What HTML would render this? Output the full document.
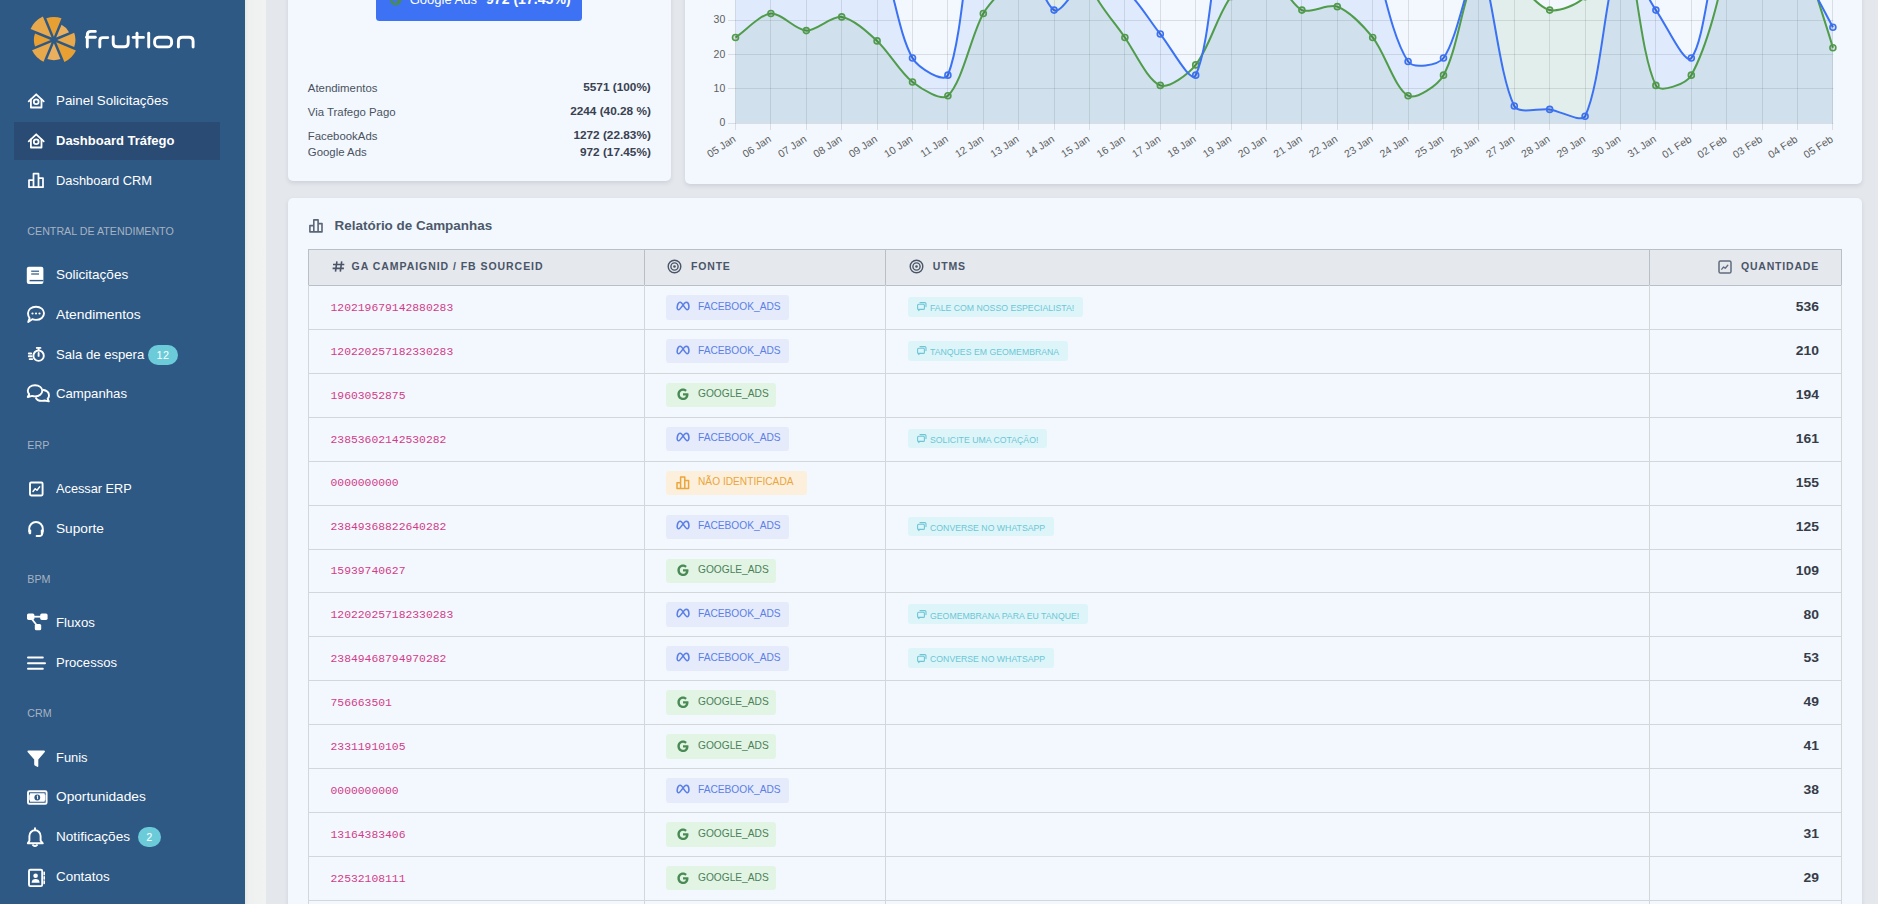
<!DOCTYPE html><html><head><meta charset="utf-8"><title>Dashboard Tráfego</title><style>html,body{margin:0;padding:0;}body{width:1878px;height:904px;overflow:hidden;position:relative;background:#e4e7ec;font-family:"Liberation Sans",sans-serif;}</style></head><body><div style="position:absolute;left:0px;top:0px;width:245px;height:904px;background:#2e5985;"></div><div style="position:absolute;left:245px;top:0px;width:21px;height:904px;background:linear-gradient(to right,#e6e7e7 0px,#eff1f1 4px,#f1f3f3 21px);"></div><svg style="position:absolute;left:0px;top:0px;overflow:visible" width="245" height="80" viewBox="0 0 245 80"><path d="M53.90,36.63 L46.30,18.30 A22.9,22.9 0 0 1 61.50,18.30 Z" fill="#e8a033"/><path d="M56.21,37.59 L61.54,24.71 A17,17 0 0 1 69.09,32.26 Z" fill="#eab05e"/><path d="M57.17,39.90 L74.21,32.84 A21.5,21.5 0 0 1 74.21,46.96 Z" fill="#e8a84c"/><path d="M56.21,42.21 L75.93,50.38 A24.4,24.4 0 0 1 64.38,61.93 Z" fill="#e8a033"/><path d="M53.90,43.17 L60.46,59.00 A20.2,20.2 0 0 1 47.34,59.00 Z" fill="#eab05e"/><path d="M51.59,42.21 L43.50,61.75 A24.2,24.2 0 0 1 32.05,50.30 Z" fill="#e8a84c"/><path d="M50.63,39.90 L34.98,46.38 A20,20 0 0 1 34.98,33.42 Z" fill="#e8a033"/><path d="M51.59,37.59 L30.57,28.88 A25.8,25.8 0 0 1 42.88,16.57 Z" fill="#e8a84c"/></svg><svg style="position:absolute;left:0px;top:0px;overflow:visible" width="245" height="80" viewBox="0 0 245 80"><g fill="none" stroke="#fff" stroke-width="2.9" stroke-linecap="round" stroke-linejoin="round"><path d="M87.3,47.1 V35 Q87.3,31.4 90.9,31.4 H95.3"/><path d="M86.6,37.2 H95.3"/><path d="M99.8,47.1 V40.6 Q99.8,37.6 102.8,37.6 H107.8"/><path d="M113.2,36.6 V43 Q113.2,46.8 117.2,46.8 H124.2 Q128.2,46.8 128.2,43 V36.6"/><path d="M137,33.3 V47.1"/><path d="M133.2,37.4 H143.4"/><path d="M148.7,33.3 V47.1"/><rect x="154.6" y="37.2" width="17" height="9.7" rx="4" ry="4"/><path d="M178.4,47.1 V41.2 Q178.4,37.2 182.4,37.2 H189.1 Q193.1,37.2 193.1,41.2 V47.1"/></g></svg><div style="position:absolute;left:14px;top:122px;width:206px;height:38px;background:#2a4b73;"></div><div style="position:absolute;left:27.3px;top:225.94px;font-family:'Liberation Sans', sans-serif;font-size:10.7px;line-height:10.7px;font-weight:400;color:#a7b3c1;white-space:nowrap;letter-spacing:0px;">CENTRAL DE ATENDIMENTO</div><div style="position:absolute;left:27.3px;top:439.94px;font-family:'Liberation Sans', sans-serif;font-size:10.7px;line-height:10.7px;font-weight:400;color:#a7b3c1;white-space:nowrap;letter-spacing:0px;">ERP</div><div style="position:absolute;left:27.3px;top:573.94px;font-family:'Liberation Sans', sans-serif;font-size:10.7px;line-height:10.7px;font-weight:400;color:#a7b3c1;white-space:nowrap;letter-spacing:0px;">BPM</div><div style="position:absolute;left:27.3px;top:707.94px;font-family:'Liberation Sans', sans-serif;font-size:10.7px;line-height:10.7px;font-weight:400;color:#a7b3c1;white-space:nowrap;letter-spacing:0px;">CRM</div><div style="position:absolute;left:56px;top:93.66px;font-family:'Liberation Sans', sans-serif;font-size:13.4px;line-height:13.4px;font-weight:400;color:#fff;white-space:nowrap;letter-spacing:0px;transform:scaleX(0.997);transform-origin:0 0;">Painel Solicitações</div><svg style="position:absolute;left:0px;top:0px;overflow:visible" width="245" height="904" viewBox="0 0 245 904"><g fill="none" stroke="#fff" stroke-width="1.8" stroke-linecap="round" stroke-linejoin="round"><path d="M28.7,101.30 L36.2,94.30 L43.7,101.30"/><path d="M30.9,99.40 V107.50 H41.5 V99.40"/><circle cx="36.2" cy="101.70" r="2.4"/></g></svg><div style="position:absolute;left:56px;top:134.00px;font-family:'Liberation Sans', sans-serif;font-size:13.0px;line-height:13.0px;font-weight:700;color:#fff;white-space:nowrap;letter-spacing:0px;transform:scaleX(1.0);transform-origin:0 0;">Dashboard Tráfego</div><svg style="position:absolute;left:0px;top:0px;overflow:visible" width="245" height="904" viewBox="0 0 245 904"><g fill="none" stroke="#fff" stroke-width="1.8" stroke-linecap="round" stroke-linejoin="round"><path d="M28.7,141.30 L36.2,134.30 L43.7,141.30"/><path d="M30.9,139.40 V147.50 H41.5 V139.40"/><circle cx="36.2" cy="141.70" r="2.4"/></g></svg><div style="position:absolute;left:56px;top:173.66px;font-family:'Liberation Sans', sans-serif;font-size:13.4px;line-height:13.4px;font-weight:400;color:#fff;white-space:nowrap;letter-spacing:0px;transform:scaleX(0.963);transform-origin:0 0;">Dashboard CRM</div><svg style="position:absolute;left:0px;top:0px;overflow:visible" width="245" height="904" viewBox="0 0 245 904"><g transform="translate(28,172.2)" fill="none" stroke="#fff" stroke-width="1.75" stroke-linejoin="round"><path d="M1,15 V8 H5.5 V15 Z M5.5,15 V1.5 H10.5 V15 Z M10.5,15 V6 H15 V15 Z"/></g></svg><div style="position:absolute;left:56px;top:267.66px;font-family:'Liberation Sans', sans-serif;font-size:13.4px;line-height:13.4px;font-weight:400;color:#fff;white-space:nowrap;letter-spacing:0px;transform:scaleX(1.01);transform-origin:0 0;">Solicitações</div><svg style="position:absolute;left:0px;top:0px;overflow:visible" width="245" height="904" viewBox="0 0 245 904"><g><rect x="26.8" y="266.70" width="16.6" height="17.4" rx="2" fill="#fff"/><rect x="29.6" y="279.90" width="13.8" height="1.4" fill="#2e5985"/><rect x="31.2" y="270.60" width="7.8" height="1.2" fill="#2e5985"/><rect x="31.2" y="273.40" width="7.8" height="1.2" fill="#2e5985"/></g></svg><div style="position:absolute;left:56px;top:307.66px;font-family:'Liberation Sans', sans-serif;font-size:13.4px;line-height:13.4px;font-weight:400;color:#fff;white-space:nowrap;letter-spacing:0px;transform:scaleX(1.035);transform-origin:0 0;">Atendimentos</div><svg style="position:absolute;left:0px;top:0px;overflow:visible" width="245" height="904" viewBox="0 0 245 904"><g transform="translate(27,305.7)"><path d="M9,1 C13.8,1 17,4 17,7.6 C17,11.2 13.8,14.2 9,14.2 C7.6,14.2 6.4,14 5.3,13.5 L1.2,16.3 L2.6,12.4 C1.5,11.1 1,9.4 1,7.6 C1,4 4.2,1 9,1 Z" fill="none" stroke="#fff" stroke-width="1.9" stroke-linejoin="round"/><circle cx="5.5" cy="7.8" r="1.1" fill="#fff"/><circle cx="9" cy="7.8" r="1.1" fill="#fff"/><circle cx="12.5" cy="7.8" r="1.1" fill="#fff"/></g></svg><div style="position:absolute;left:56px;top:347.66px;font-family:'Liberation Sans', sans-serif;font-size:13.4px;line-height:13.4px;font-weight:400;color:#fff;white-space:nowrap;letter-spacing:0px;transform:scaleX(0.98);transform-origin:0 0;">Sala de espera</div><svg style="position:absolute;left:0px;top:0px;overflow:visible" width="245" height="904" viewBox="0 0 245 904"><g transform="translate(28,346.7)" fill="none" stroke="#fff" stroke-width="1.9" stroke-linecap="round"><circle cx="10.6" cy="9" r="5.2"/><path d="M10.6,6.2 V9.2"/><path d="M8.8,1.2 H12.4"/><path d="M10.6,1.2 V3.6"/><path d="M0.8,6.8 H3.2 M0.8,9.6 H3.6 M1.6,12.4 H4.2"/></g></svg><div style="position:absolute;left:56px;top:386.66px;font-family:'Liberation Sans', sans-serif;font-size:13.4px;line-height:13.4px;font-weight:400;color:#fff;white-space:nowrap;letter-spacing:0px;transform:scaleX(0.983);transform-origin:0 0;">Campanhas</div><svg style="position:absolute;left:0px;top:0px;overflow:visible" width="245" height="904" viewBox="0 0 245 904"><g transform="translate(27,384.2)" fill="none" stroke="#fff" stroke-width="1.9" stroke-linejoin="round"><path d="M8,1 C12.3,1 15.3,3.6 15.3,6.6 C15.3,9.6 12.3,12.2 8,12.2 C7,12.2 6,12 5.2,11.7 L0.8,12.8 L2.2,10 C1.3,9 0.8,7.9 0.8,6.6 C0.8,3.6 3.7,1 8,1 Z"/><path d="M15.6,5.6 C19.3,6.2 22,8.4 22,11.2 C22,12.5 21.5,13.6 20.6,14.5 L21.8,17.2 L17.6,16.3 C16.8,16.6 15.9,16.7 15,16.7 C11.8,16.7 9.4,15.2 8.6,13.1"/></g></svg><div style="position:absolute;left:56px;top:481.66px;font-family:'Liberation Sans', sans-serif;font-size:13.4px;line-height:13.4px;font-weight:400;color:#fff;white-space:nowrap;letter-spacing:0px;transform:scaleX(0.952);transform-origin:0 0;">Acessar ERP</div><svg style="position:absolute;left:0px;top:0px;overflow:visible" width="245" height="904" viewBox="0 0 245 904"><g transform="translate(29,481.5)"><rect x="1" y="1" width="12.6" height="13" rx="1.2" fill="none" stroke="#fff" stroke-width="1.9"/><path d="M4,10 L6.2,7.2 L8,8.8 L10.6,5.4" fill="none" stroke="#fff" stroke-width="1.5" stroke-linecap="round" stroke-linejoin="round"/></g></svg><div style="position:absolute;left:56px;top:521.66px;font-family:'Liberation Sans', sans-serif;font-size:13.4px;line-height:13.4px;font-weight:400;color:#fff;white-space:nowrap;letter-spacing:0px;transform:scaleX(1.021);transform-origin:0 0;">Suporte</div><svg style="position:absolute;left:0px;top:0px;overflow:visible" width="245" height="904" viewBox="0 0 245 904"><g transform="translate(28,521.0)" fill="none" stroke="#fff" stroke-width="1.9" stroke-linecap="round"><path d="M1.2,10.5 V7.8 C1.2,4 4.2,1 8,1 C11.8,1 14.8,4 14.8,7.8 V10.5"/><rect x="0.6" y="8.6" width="2.6" height="4.6" rx="1" fill="#fff" stroke="none"/><rect x="12.8" y="8.6" width="2.6" height="4.6" rx="1" fill="#fff" stroke="none"/><path d="M14.2,12.5 C14.2,14 13,15 11.2,15 H8.6"/></g></svg><div style="position:absolute;left:56px;top:615.66px;font-family:'Liberation Sans', sans-serif;font-size:13.4px;line-height:13.4px;font-weight:400;color:#fff;white-space:nowrap;letter-spacing:0px;transform:scaleX(0.987);transform-origin:0 0;">Fluxos</div><svg style="position:absolute;left:0px;top:0px;overflow:visible" width="245" height="904" viewBox="0 0 245 904"><g transform="translate(27,613.5)" fill="#fff"><rect x="0" y="0" width="7.4" height="6.4" rx="1.6"/><rect x="13.2" y="0" width="7.4" height="6.4" rx="1.6"/><rect x="7.8" y="10.4" width="6.4" height="6.4" rx="1.6"/><path d="M6,3.2 H14" stroke="#fff" stroke-width="1.8"/><path d="M4,4.5 L10,12" stroke="#fff" stroke-width="1.8"/></g></svg><div style="position:absolute;left:56px;top:655.66px;font-family:'Liberation Sans', sans-serif;font-size:13.4px;line-height:13.4px;font-weight:400;color:#fff;white-space:nowrap;letter-spacing:0px;transform:scaleX(0.976);transform-origin:0 0;">Processos</div><svg style="position:absolute;left:0px;top:0px;overflow:visible" width="245" height="904" viewBox="0 0 245 904"><g transform="translate(27,656.0)" fill="none" stroke="#fff" stroke-width="2" stroke-linecap="round"><path d="M1,1.6 H15.8 M1,7.2 H18 M1,12.8 H15.8"/></g></svg><div style="position:absolute;left:56px;top:750.66px;font-family:'Liberation Sans', sans-serif;font-size:13.4px;line-height:13.4px;font-weight:400;color:#fff;white-space:nowrap;letter-spacing:0px;transform:scaleX(0.963);transform-origin:0 0;">Funis</div><svg style="position:absolute;left:0px;top:0px;overflow:visible" width="245" height="904" viewBox="0 0 245 904"><g transform="translate(27,750.2)"><path d="M0.4,1.6 Q0.4,0.4 1.6,0.4 H16.8 Q18,0.4 18,1.6 L11.3,9.2 V15.8 Q11.3,17 10.2,16.6 L8.2,15.6 Q7.2,15 7.2,14 V9.2 Z" fill="#fff"/></g></svg><div style="position:absolute;left:56px;top:789.66px;font-family:'Liberation Sans', sans-serif;font-size:13.4px;line-height:13.4px;font-weight:400;color:#fff;white-space:nowrap;letter-spacing:0px;transform:scaleX(1.022);transform-origin:0 0;">Oportunidades</div><svg style="position:absolute;left:0px;top:0px;overflow:visible" width="245" height="904" viewBox="0 0 245 904"><g transform="translate(27,790.2)"><rect x="1" y="1" width="18.6" height="12.6" rx="1.4" fill="none" stroke="#fff" stroke-width="1.9"/><path d="M3,3 H17.6 C17.6,4.6 18.4,5 18.4,5 V9.6 C18.4,9.6 17.6,10 17.6,11.6 H3 C3,10 2.2,9.6 2.2,9.6 V5 C2.2,5 3,4.6 3,3 Z" fill="#fff"/><circle cx="10.3" cy="7.3" r="2.9" fill="#2e5985"/><path d="M9.8,6 L10.6,5.6 V9" stroke="#fff" stroke-width="1" fill="none"/></g></svg><div style="position:absolute;left:56px;top:829.66px;font-family:'Liberation Sans', sans-serif;font-size:13.4px;line-height:13.4px;font-weight:400;color:#fff;white-space:nowrap;letter-spacing:0px;transform:scaleX(1.015);transform-origin:0 0;">Notificações</div><svg style="position:absolute;left:0px;top:0px;overflow:visible" width="245" height="904" viewBox="0 0 245 904"><g transform="translate(27,827.7)" fill="none" stroke="#fff" stroke-width="1.9" stroke-linejoin="round"><path d="M8,2.6 C11.2,2.6 13.6,5.2 13.6,8.4 V13 L15.8,15.6 H0.8 L2.4,13 V8.4 C2.4,5.2 4.8,2.6 8,2.6 Z"/><path d="M8,0.4 V2.4" stroke-linecap="round"/><path d="M6,17.4 Q8,19.4 10,17.4" stroke-linecap="round"/></g></svg><div style="position:absolute;left:56px;top:869.66px;font-family:'Liberation Sans', sans-serif;font-size:13.4px;line-height:13.4px;font-weight:400;color:#fff;white-space:nowrap;letter-spacing:0px;transform:scaleX(1.002);transform-origin:0 0;">Contatos</div><svg style="position:absolute;left:0px;top:0px;overflow:visible" width="245" height="904" viewBox="0 0 245 904"><g transform="translate(28,868.7)"><rect x="1" y="1" width="13.2" height="16.4" rx="1.4" fill="none" stroke="#fff" stroke-width="1.9"/><circle cx="7.6" cy="7" r="2.3" fill="#fff"/><path d="M3.6,14 C3.6,11.4 5.4,10.4 7.6,10.4 C9.8,10.4 11.6,11.4 11.6,14 Z" fill="#fff"/><path d="M16.2,3.6 V6 M16.2,8 V10.4 M16.2,12.4 V14.8" stroke="#fff" stroke-width="1.6" stroke-linecap="round"/></g></svg><div style="position:absolute;left:148px;top:345px;width:30px;height:20px;background:#6ccbd9;border-radius:10px;"></div><div style="position:absolute;left:156.6px;top:349.96px;font-family:'Liberation Sans', sans-serif;font-size:10.8px;line-height:10.8px;font-weight:400;color:#fff;white-space:nowrap;letter-spacing:0.3px;">12</div><div style="position:absolute;left:138px;top:827px;width:23px;height:20px;background:#6ccbd9;border-radius:10px;"></div><div style="position:absolute;left:146.3px;top:831.66px;font-family:'Liberation Sans', sans-serif;font-size:10.8px;line-height:10.8px;font-weight:400;color:#fff;white-space:nowrap;letter-spacing:0px;">2</div><div style="position:absolute;left:288px;top:-60px;width:383px;height:241px;background:#f2f8fe;border-radius:5px;box-shadow:0 2px 4px rgba(50,60,85,0.12);"></div><div style="position:absolute;left:685px;top:-60px;width:1177px;height:244px;background:#f2f8fe;border-radius:5px;box-shadow:0 2px 4px rgba(50,60,85,0.12);"></div><div style="position:absolute;left:288px;top:198px;width:1574px;height:800px;background:#f2f8fe;border-radius:5px;box-shadow:0 2px 4px rgba(50,60,85,0.12);"></div><div style="position:absolute;left:376px;top:-20px;width:206px;height:41px;background:#3d72f5;border-radius:3.5px;"></div><div style="position:absolute;left:409.7px;top:-6.80px;font-family:'Liberation Sans', sans-serif;font-size:13px;line-height:13px;font-weight:400;color:#fff;white-space:nowrap;letter-spacing:0px;">Google Ads</div><div style="position:absolute;left:486px;top:-7.74px;font-family:'Liberation Sans', sans-serif;font-size:14.1px;line-height:14.1px;font-weight:700;color:#fff;white-space:nowrap;letter-spacing:0px;">972 (17.45%)</div><svg style="position:absolute;left:388.8px;top:-7.3px;overflow:visible" width="13.4" height="13.4" viewBox="0 0 16 16"><path d="M13.6,6.6 H8 V9.4 H11 C10.6,11 9.4,12 8,12 C5.8,12 4,10.2 4,8 C4,5.8 5.8,4 8,4 C9,4 9.9,4.4 10.6,5 L12.6,3 C11.4,1.8 9.8,1.2 8,1.2 C4.2,1.2 1.2,4.2 1.2,8 C1.2,11.8 4.2,14.8 8,14.8 C11.8,14.8 14.8,12 14.8,8 Z" fill="#4b8c4b"/></svg><div style="position:absolute;left:307.8px;top:82.65px;font-family:'Liberation Sans', sans-serif;font-size:11.4px;line-height:11.4px;font-weight:400;color:#4a5260;white-space:nowrap;letter-spacing:0px;">Atendimentos</div><div style="position:absolute;right:1227.2px;top:82.31px;font-family:'Liberation Sans', sans-serif;font-size:11.8px;line-height:11.8px;font-weight:700;color:#3a4150;white-space:nowrap;letter-spacing:0px;">5571 (100%)</div><div style="position:absolute;left:307.8px;top:106.65px;font-family:'Liberation Sans', sans-serif;font-size:11.4px;line-height:11.4px;font-weight:400;color:#4a5260;white-space:nowrap;letter-spacing:0px;">Via Trafego Pago</div><div style="position:absolute;right:1227.2px;top:106.31px;font-family:'Liberation Sans', sans-serif;font-size:11.8px;line-height:11.8px;font-weight:700;color:#3a4150;white-space:nowrap;letter-spacing:0px;">2244 (40.28 %)</div><div style="position:absolute;left:307.8px;top:130.65px;font-family:'Liberation Sans', sans-serif;font-size:11.4px;line-height:11.4px;font-weight:400;color:#4a5260;white-space:nowrap;letter-spacing:0px;">FacebookAds</div><div style="position:absolute;right:1227.2px;top:130.31px;font-family:'Liberation Sans', sans-serif;font-size:11.8px;line-height:11.8px;font-weight:700;color:#3a4150;white-space:nowrap;letter-spacing:0px;">1272 (22.83%)</div><div style="position:absolute;left:307.8px;top:147.15px;font-family:'Liberation Sans', sans-serif;font-size:11.4px;line-height:11.4px;font-weight:400;color:#4a5260;white-space:nowrap;letter-spacing:0px;">Google Ads</div><div style="position:absolute;right:1227.2px;top:146.81px;font-family:'Liberation Sans', sans-serif;font-size:11.8px;line-height:11.8px;font-weight:700;color:#3a4150;white-space:nowrap;letter-spacing:0px;">972 (17.45%)</div><svg style="position:absolute;left:0;top:0" width="1878" height="200" viewBox="0 0 1878 200"><defs><clipPath id="ca"><rect x="685" y="0" width="1177" height="184"/></clipPath></defs><g clip-path="url(#ca)"><path d="M735.5,-10 V130 M770.5,-10 V130 M806.5,-10 V130 M841.5,-10 V130 M877.5,-10 V130 M912.5,-10 V130 M947.5,-10 V130 M983.5,-10 V130 M1018.5,-10 V130 M1054.5,-10 V130 M1089.5,-10 V130 M1124.5,-10 V130 M1160.5,-10 V130 M1195.5,-10 V130 M1231.5,-10 V130 M1266.5,-10 V130 M1301.5,-10 V130 M1337.5,-10 V130 M1372.5,-10 V130 M1408.5,-10 V130 M1443.5,-10 V130 M1478.5,-10 V130 M1514.5,-10 V130 M1549.5,-10 V130 M1585.5,-10 V130 M1620.5,-10 V130 M1655.5,-10 V130 M1691.5,-10 V130 M1726.5,-10 V130 M1762.5,-10 V130 M1797.5,-10 V130 M1832.5,-10 V130 M728,123.5 H1833.4 M728,88.5 H1833.4 M728,54.5 H1833.4 M728,20.5 H1833.4" stroke="rgba(0,0,0,0.1)" stroke-width="1" fill="none"/><path d="M735.50,37.47 C746.12,30.28 759.84,14.57 770.90,13.50 C781.08,12.52 795.49,30.10 806.30,30.62 C816.73,31.13 831.71,15.48 841.70,16.92 C852.95,18.56 867.74,32.29 877.10,40.90 C888.98,51.82 900.00,72.33 912.50,82.00 C921.24,88.77 941.57,101.82 947.90,95.70 C962.81,81.27 970.50,36.89 983.30,13.50 C991.74,-1.92 1013.28,-17.16 1018.70,-33.67 C1034.52,-81.91 1043.94,-204.60 1054.10,-202.33 C1065.18,-199.86 1073.76,-71.16 1089.50,-17.86 C1095.00,0.78 1113.76,21.23 1124.90,37.47 C1135.00,52.21 1147.71,80.55 1160.30,85.42 C1168.95,88.77 1188.33,74.13 1195.70,64.88 C1209.57,47.46 1217.45,14.34 1231.10,-3.49 C1238.69,-13.41 1256.88,-29.46 1266.50,-27.62 C1278.12,-25.39 1289.32,3.98 1301.90,10.08 C1310.56,14.26 1328.14,3.11 1337.30,6.65 C1349.38,11.33 1364.04,26.58 1372.70,37.47 C1385.28,53.29 1394.83,88.64 1408.10,95.70 C1416.07,99.94 1437.79,85.32 1443.50,75.15 C1459.03,47.50 1463.01,-9.48 1478.90,-30.37 C1484.25,-37.41 1504.66,-23.47 1514.30,-17.96 C1525.90,-11.33 1538.15,7.70 1549.70,10.08 C1559.39,12.07 1577.84,4.51 1585.10,-3.41 C1599.08,-18.68 1613.75,-75.70 1620.50,-67.23 C1634.99,-49.04 1638.70,50.85 1655.90,85.42 C1659.94,93.56 1686.39,84.00 1691.30,75.15 C1707.63,45.66 1720.41,-6.21 1726.70,-42.38 C1741.65,-128.32 1750.87,-326.86 1762.10,-331.89 C1772.11,-336.38 1783.22,-150.67 1797.50,-74.12 C1804.46,-36.78 1822.28,11.19 1832.90,47.75 L1832.90,123.1 L735.50,123.1 Z" fill="rgba(80,156,74,0.10)" stroke="none"/><path d="M735.50,-202.49 C746.12,-163.42 763.26,-60.67 770.90,-72.25 C784.50,-92.86 795.81,-310.69 806.30,-309.77 C817.05,-308.82 823.35,-133.33 841.70,-66.02 C844.59,-55.40 871.69,-59.47 877.10,-49.99 C892.93,-22.25 896.72,30.13 912.50,58.02 C917.96,67.67 944.42,84.02 947.90,75.15 C965.66,29.83 967.02,-88.60 983.30,-122.62 C988.26,-132.97 1010.11,-88.85 1018.70,-72.75 C1031.35,-49.04 1040.21,0.09 1054.10,10.08 C1061.45,15.36 1077.57,-18.39 1089.50,-21.85 C1098.81,-24.54 1116.50,-17.04 1124.90,-10.40 C1137.74,-0.27 1149.43,20.92 1160.30,34.05 C1170.67,46.58 1191.07,84.98 1195.70,75.15 C1212.31,39.90 1213.23,-65.50 1231.10,-116.22 C1234.47,-125.78 1257.17,-128.56 1266.50,-125.78 C1278.41,-122.24 1294.34,-90.18 1301.90,-95.13 C1315.58,-104.10 1328.86,-177.72 1337.30,-172.17 C1350.10,-163.76 1361.52,-85.50 1372.70,-48.60 C1382.76,-15.42 1391.86,36.99 1408.10,61.45 C1413.10,68.98 1437.83,65.59 1443.50,58.02 C1459.07,37.23 1470.29,-38.90 1478.90,-33.07 C1491.53,-24.51 1497.28,71.72 1514.30,105.97 C1518.52,114.46 1539.15,107.87 1549.70,109.40 C1560.39,110.95 1581.24,123.10 1585.10,116.25 C1602.48,79.10 1605.20,-19.04 1620.50,-41.98 C1626.44,-50.89 1644.99,-5.34 1655.90,10.08 C1666.23,24.67 1685.07,66.06 1691.30,58.02 C1706.31,38.67 1709.80,-45.51 1726.70,-81.22 C1731.04,-90.39 1754.35,-96.28 1762.10,-91.55 C1775.59,-83.34 1787.66,-54.59 1797.50,-38.08 C1808.90,-18.96 1822.28,7.62 1832.90,27.20 L1832.90,123.1 L735.50,123.1 Z" fill="rgba(59,113,243,0.10)" stroke="none"/><path d="M735.50,37.47 C746.12,30.28 759.84,14.57 770.90,13.50 C781.08,12.52 795.49,30.10 806.30,30.62 C816.73,31.13 831.71,15.48 841.70,16.92 C852.95,18.56 867.74,32.29 877.10,40.90 C888.98,51.82 900.00,72.33 912.50,82.00 C921.24,88.77 941.57,101.82 947.90,95.70 C962.81,81.27 970.50,36.89 983.30,13.50 C991.74,-1.92 1013.28,-17.16 1018.70,-33.67 C1034.52,-81.91 1043.94,-204.60 1054.10,-202.33 C1065.18,-199.86 1073.76,-71.16 1089.50,-17.86 C1095.00,0.78 1113.76,21.23 1124.90,37.47 C1135.00,52.21 1147.71,80.55 1160.30,85.42 C1168.95,88.77 1188.33,74.13 1195.70,64.88 C1209.57,47.46 1217.45,14.34 1231.10,-3.49 C1238.69,-13.41 1256.88,-29.46 1266.50,-27.62 C1278.12,-25.39 1289.32,3.98 1301.90,10.08 C1310.56,14.26 1328.14,3.11 1337.30,6.65 C1349.38,11.33 1364.04,26.58 1372.70,37.47 C1385.28,53.29 1394.83,88.64 1408.10,95.70 C1416.07,99.94 1437.79,85.32 1443.50,75.15 C1459.03,47.50 1463.01,-9.48 1478.90,-30.37 C1484.25,-37.41 1504.66,-23.47 1514.30,-17.96 C1525.90,-11.33 1538.15,7.70 1549.70,10.08 C1559.39,12.07 1577.84,4.51 1585.10,-3.41 C1599.08,-18.68 1613.75,-75.70 1620.50,-67.23 C1634.99,-49.04 1638.70,50.85 1655.90,85.42 C1659.94,93.56 1686.39,84.00 1691.30,75.15 C1707.63,45.66 1720.41,-6.21 1726.70,-42.38 C1741.65,-128.32 1750.87,-326.86 1762.10,-331.89 C1772.11,-336.38 1783.22,-150.67 1797.50,-74.12 C1804.46,-36.78 1822.28,11.19 1832.90,47.75" fill="none" stroke="#509c4a" stroke-width="2"/><g fill="rgba(0,0,0,0.1)" stroke="#509c4a" stroke-width="1.6"><circle cx="735.50" cy="37.47" r="3"/><circle cx="770.90" cy="13.50" r="3"/><circle cx="806.30" cy="30.62" r="3"/><circle cx="841.70" cy="16.92" r="3"/><circle cx="877.10" cy="40.90" r="3"/><circle cx="912.50" cy="82.00" r="3"/><circle cx="947.90" cy="95.70" r="3"/><circle cx="983.30" cy="13.50" r="3"/><circle cx="1124.90" cy="37.47" r="3"/><circle cx="1160.30" cy="85.42" r="3"/><circle cx="1195.70" cy="64.88" r="3"/><circle cx="1231.10" cy="-3.49" r="3"/><circle cx="1301.90" cy="10.08" r="3"/><circle cx="1337.30" cy="6.65" r="3"/><circle cx="1372.70" cy="37.47" r="3"/><circle cx="1408.10" cy="95.70" r="3"/><circle cx="1443.50" cy="75.15" r="3"/><circle cx="1549.70" cy="10.08" r="3"/><circle cx="1585.10" cy="-3.41" r="3"/><circle cx="1655.90" cy="85.42" r="3"/><circle cx="1691.30" cy="75.15" r="3"/><circle cx="1832.90" cy="47.75" r="3"/></g><path d="M735.50,-202.49 C746.12,-163.42 763.26,-60.67 770.90,-72.25 C784.50,-92.86 795.81,-310.69 806.30,-309.77 C817.05,-308.82 823.35,-133.33 841.70,-66.02 C844.59,-55.40 871.69,-59.47 877.10,-49.99 C892.93,-22.25 896.72,30.13 912.50,58.02 C917.96,67.67 944.42,84.02 947.90,75.15 C965.66,29.83 967.02,-88.60 983.30,-122.62 C988.26,-132.97 1010.11,-88.85 1018.70,-72.75 C1031.35,-49.04 1040.21,0.09 1054.10,10.08 C1061.45,15.36 1077.57,-18.39 1089.50,-21.85 C1098.81,-24.54 1116.50,-17.04 1124.90,-10.40 C1137.74,-0.27 1149.43,20.92 1160.30,34.05 C1170.67,46.58 1191.07,84.98 1195.70,75.15 C1212.31,39.90 1213.23,-65.50 1231.10,-116.22 C1234.47,-125.78 1257.17,-128.56 1266.50,-125.78 C1278.41,-122.24 1294.34,-90.18 1301.90,-95.13 C1315.58,-104.10 1328.86,-177.72 1337.30,-172.17 C1350.10,-163.76 1361.52,-85.50 1372.70,-48.60 C1382.76,-15.42 1391.86,36.99 1408.10,61.45 C1413.10,68.98 1437.83,65.59 1443.50,58.02 C1459.07,37.23 1470.29,-38.90 1478.90,-33.07 C1491.53,-24.51 1497.28,71.72 1514.30,105.97 C1518.52,114.46 1539.15,107.87 1549.70,109.40 C1560.39,110.95 1581.24,123.10 1585.10,116.25 C1602.48,79.10 1605.20,-19.04 1620.50,-41.98 C1626.44,-50.89 1644.99,-5.34 1655.90,10.08 C1666.23,24.67 1685.07,66.06 1691.30,58.02 C1706.31,38.67 1709.80,-45.51 1726.70,-81.22 C1731.04,-90.39 1754.35,-96.28 1762.10,-91.55 C1775.59,-83.34 1787.66,-54.59 1797.50,-38.08 C1808.90,-18.96 1822.28,7.62 1832.90,27.20" fill="none" stroke="#3b71f3" stroke-width="2"/><g fill="rgba(0,0,0,0.1)" stroke="#3b71f3" stroke-width="1.6"><circle cx="912.50" cy="58.02" r="3"/><circle cx="947.90" cy="75.15" r="3"/><circle cx="1054.10" cy="10.08" r="3"/><circle cx="1160.30" cy="34.05" r="3"/><circle cx="1195.70" cy="75.15" r="3"/><circle cx="1408.10" cy="61.45" r="3"/><circle cx="1443.50" cy="58.02" r="3"/><circle cx="1514.30" cy="105.97" r="3"/><circle cx="1549.70" cy="109.40" r="3"/><circle cx="1585.10" cy="116.25" r="3"/><circle cx="1655.90" cy="10.08" r="3"/><circle cx="1691.30" cy="58.02" r="3"/><circle cx="1832.90" cy="27.20" r="3"/></g></g><g font-family="Liberation Sans, sans-serif" font-size="10.5" fill="#606060"><text x="725.3" y="126.20" text-anchor="end">0</text><text x="725.3" y="91.95" text-anchor="end">10</text><text x="725.3" y="57.70" text-anchor="end">20</text><text x="725.3" y="23.45" text-anchor="end">30</text><text transform="translate(732.60,134.9) rotate(-33)" x="0" y="7.2" text-anchor="end">05 Jan</text><text transform="translate(768.00,134.9) rotate(-33)" x="0" y="7.2" text-anchor="end">06 Jan</text><text transform="translate(803.40,134.9) rotate(-33)" x="0" y="7.2" text-anchor="end">07 Jan</text><text transform="translate(838.80,134.9) rotate(-33)" x="0" y="7.2" text-anchor="end">08 Jan</text><text transform="translate(874.20,134.9) rotate(-33)" x="0" y="7.2" text-anchor="end">09 Jan</text><text transform="translate(909.60,134.9) rotate(-33)" x="0" y="7.2" text-anchor="end">10 Jan</text><text transform="translate(945.00,134.9) rotate(-33)" x="0" y="7.2" text-anchor="end">11 Jan</text><text transform="translate(980.40,134.9) rotate(-33)" x="0" y="7.2" text-anchor="end">12 Jan</text><text transform="translate(1015.80,134.9) rotate(-33)" x="0" y="7.2" text-anchor="end">13 Jan</text><text transform="translate(1051.20,134.9) rotate(-33)" x="0" y="7.2" text-anchor="end">14 Jan</text><text transform="translate(1086.60,134.9) rotate(-33)" x="0" y="7.2" text-anchor="end">15 Jan</text><text transform="translate(1122.00,134.9) rotate(-33)" x="0" y="7.2" text-anchor="end">16 Jan</text><text transform="translate(1157.40,134.9) rotate(-33)" x="0" y="7.2" text-anchor="end">17 Jan</text><text transform="translate(1192.80,134.9) rotate(-33)" x="0" y="7.2" text-anchor="end">18 Jan</text><text transform="translate(1228.20,134.9) rotate(-33)" x="0" y="7.2" text-anchor="end">19 Jan</text><text transform="translate(1263.60,134.9) rotate(-33)" x="0" y="7.2" text-anchor="end">20 Jan</text><text transform="translate(1299.00,134.9) rotate(-33)" x="0" y="7.2" text-anchor="end">21 Jan</text><text transform="translate(1334.40,134.9) rotate(-33)" x="0" y="7.2" text-anchor="end">22 Jan</text><text transform="translate(1369.80,134.9) rotate(-33)" x="0" y="7.2" text-anchor="end">23 Jan</text><text transform="translate(1405.20,134.9) rotate(-33)" x="0" y="7.2" text-anchor="end">24 Jan</text><text transform="translate(1440.60,134.9) rotate(-33)" x="0" y="7.2" text-anchor="end">25 Jan</text><text transform="translate(1476.00,134.9) rotate(-33)" x="0" y="7.2" text-anchor="end">26 Jan</text><text transform="translate(1511.40,134.9) rotate(-33)" x="0" y="7.2" text-anchor="end">27 Jan</text><text transform="translate(1546.80,134.9) rotate(-33)" x="0" y="7.2" text-anchor="end">28 Jan</text><text transform="translate(1582.20,134.9) rotate(-33)" x="0" y="7.2" text-anchor="end">29 Jan</text><text transform="translate(1617.60,134.9) rotate(-33)" x="0" y="7.2" text-anchor="end">30 Jan</text><text transform="translate(1653.00,134.9) rotate(-33)" x="0" y="7.2" text-anchor="end">31 Jan</text><text transform="translate(1688.40,134.9) rotate(-33)" x="0" y="7.2" text-anchor="end">01 Feb</text><text transform="translate(1723.80,134.9) rotate(-33)" x="0" y="7.2" text-anchor="end">02 Feb</text><text transform="translate(1759.20,134.9) rotate(-33)" x="0" y="7.2" text-anchor="end">03 Feb</text><text transform="translate(1794.60,134.9) rotate(-33)" x="0" y="7.2" text-anchor="end">04 Feb</text><text transform="translate(1830.00,134.9) rotate(-33)" x="0" y="7.2" text-anchor="end">05 Feb</text></g></svg><svg style="position:absolute;left:309px;top:219px" width="15" height="14" viewBox="0 0 15 14"><path d="M0.9,12.9 V6.6 H4.8 V12.9 Z M4.8,12.9 V0.9 H9.1 V12.9 Z M9.1,12.9 V4.6 H13 V12.9 Z" fill="none" stroke="#5a6577" stroke-width="1.6" stroke-linejoin="round"/></svg><div style="position:absolute;left:334.6px;top:218.91px;font-family:'Liberation Sans', sans-serif;font-size:13.45px;line-height:13.45px;font-weight:700;color:#4d586a;white-space:nowrap;letter-spacing:0px;">Relatório de Campanhas</div><div style="position:absolute;left:309px;top:249px;width:1532px;height:36px;background:#e5e8ed;"></div><div style="position:absolute;left:308px;top:249px;width:1534px;height:1px;background:#b9bfc8;"></div><div style="position:absolute;left:308px;top:285px;width:1534px;height:1px;background:#b9bfc8;"></div><div style="position:absolute;left:308px;top:249px;width:1px;height:700px;background:#d3d7dc;"></div><div style="position:absolute;left:644px;top:249px;width:1px;height:700px;background:#d3d7dc;"></div><div style="position:absolute;left:885px;top:249px;width:1px;height:700px;background:#d3d7dc;"></div><div style="position:absolute;left:1649px;top:249px;width:1px;height:700px;background:#d3d7dc;"></div><div style="position:absolute;left:1841px;top:249px;width:1px;height:700px;background:#d3d7dc;"></div><div style="position:absolute;left:308px;top:249px;width:1px;height:36px;background:#b9bfc8;"></div><div style="position:absolute;left:644px;top:249px;width:1px;height:36px;background:#b9bfc8;"></div><div style="position:absolute;left:885px;top:249px;width:1px;height:36px;background:#b9bfc8;"></div><div style="position:absolute;left:1649px;top:249px;width:1px;height:36px;background:#b9bfc8;"></div><div style="position:absolute;left:1841px;top:249px;width:1px;height:36px;background:#b9bfc8;"></div><div style="position:absolute;left:308px;top:329px;width:1534px;height:1px;background:#d3d7dc;"></div><div style="position:absolute;left:308px;top:373px;width:1534px;height:1px;background:#d3d7dc;"></div><div style="position:absolute;left:308px;top:417px;width:1534px;height:1px;background:#d3d7dc;"></div><div style="position:absolute;left:308px;top:461px;width:1534px;height:1px;background:#d3d7dc;"></div><div style="position:absolute;left:308px;top:505px;width:1534px;height:1px;background:#d3d7dc;"></div><div style="position:absolute;left:308px;top:549px;width:1534px;height:1px;background:#d3d7dc;"></div><div style="position:absolute;left:308px;top:592px;width:1534px;height:1px;background:#d3d7dc;"></div><div style="position:absolute;left:308px;top:636px;width:1534px;height:1px;background:#d3d7dc;"></div><div style="position:absolute;left:308px;top:680px;width:1534px;height:1px;background:#d3d7dc;"></div><div style="position:absolute;left:308px;top:724px;width:1534px;height:1px;background:#d3d7dc;"></div><div style="position:absolute;left:308px;top:768px;width:1534px;height:1px;background:#d3d7dc;"></div><div style="position:absolute;left:308px;top:812px;width:1534px;height:1px;background:#d3d7dc;"></div><div style="position:absolute;left:308px;top:856px;width:1534px;height:1px;background:#d3d7dc;"></div><div style="position:absolute;left:308px;top:900px;width:1534px;height:1px;background:#d3d7dc;"></div><div style="position:absolute;left:308px;top:944px;width:1534px;height:1px;background:#d3d7dc;"></div><svg style="position:absolute;left:332px;top:261px" width="13" height="11" viewBox="0 0 13 11"><path d="M4.9,0.4 L3.5,10.6 M9.7,0.4 L8.3,10.6 M1,3.5 H12.3 M0.6,7.4 H11.9" stroke="#4a5568" stroke-width="1.6" fill="none"/></svg><div style="position:absolute;left:351.6px;top:261.11px;font-family:'Liberation Sans', sans-serif;font-size:10.5px;line-height:10.5px;font-weight:700;color:#4a5568;white-space:nowrap;letter-spacing:0.95px;">GA CAMPAIGNID / FB SOURCEID</div><svg style="position:absolute;left:667px;top:259px" width="15" height="15" viewBox="0 0 15 15"><circle cx="7.5" cy="7.5" r="6.3" fill="none" stroke="#4a5568" stroke-width="1.4"/><circle cx="7.5" cy="7.5" r="3.6" fill="none" stroke="#4a5568" stroke-width="1.4"/><circle cx="7.5" cy="7.5" r="1.3" fill="#4a5568"/></svg><div style="position:absolute;left:691.1px;top:261.11px;font-family:'Liberation Sans', sans-serif;font-size:10.5px;line-height:10.5px;font-weight:700;color:#4a5568;white-space:nowrap;letter-spacing:0.8px;">FONTE</div><svg style="position:absolute;left:908.5px;top:259px" width="15" height="15" viewBox="0 0 15 15"><circle cx="7.5" cy="7.5" r="6.3" fill="none" stroke="#4a5568" stroke-width="1.4"/><circle cx="7.5" cy="7.5" r="3.6" fill="none" stroke="#4a5568" stroke-width="1.4"/><circle cx="7.5" cy="7.5" r="1.3" fill="#4a5568"/></svg><div style="position:absolute;left:932.8px;top:261.11px;font-family:'Liberation Sans', sans-serif;font-size:10.5px;line-height:10.5px;font-weight:700;color:#4a5568;white-space:nowrap;letter-spacing:0.8px;">UTMS</div><svg style="position:absolute;left:1717.5px;top:260px" width="14" height="14" viewBox="0 0 14 14"><rect x="1" y="1" width="12" height="12" rx="1.6" fill="none" stroke="#5f6b7c" stroke-width="1.5"/><path d="M3.8,9.2 L5.6,7 L7.2,8.2 L9.8,5.2" fill="none" stroke="#5f6b7c" stroke-width="1.3" stroke-linecap="round" stroke-linejoin="round"/></svg><div style="position:absolute;left:1741px;top:261.11px;font-family:'Liberation Sans', sans-serif;font-size:10.5px;line-height:10.5px;font-weight:700;color:#4a5568;white-space:nowrap;letter-spacing:0.8px;">QUANTIDADE</div><div style="position:absolute;left:330.5px;top:302.78px;font-family:'Liberation Mono', monospace;font-size:11.375px;line-height:11.375px;font-weight:400;color:#d23c88;white-space:nowrap;letter-spacing:0px;">120219679142880283</div><div style="position:absolute;left:666px;top:295.0px;width:123px;height:24.5px;background:#e5ebfb;border-radius:3px;"></div><svg style="position:absolute;left:676px;top:300.6px;overflow:visible" width="14" height="10" viewBox="0 0 14 10"><path d="M1.7,8.3 C0.5,6.8 1.5,1.3 4.2,1.3 C6.7,1.3 8.7,8.7 11.3,8.7 C13.7,8.7 13.5,1.3 10.3,1.3 C7.7,1.3 4.7,8.7 2.7,8.7 C2.3,8.7 1.9,8.5 1.7,8.3 Z" fill="none" stroke="#5a7fe6" stroke-width="1.6" stroke-linejoin="round"/></svg><div style="position:absolute;left:697.6px;top:300.59px;font-family:'Liberation Sans', sans-serif;font-size:11px;line-height:11px;font-weight:400;color:#5b7fe6;white-space:nowrap;transform:scaleX(0.925);transform-origin:0 0;">FACEBOOK_ADS</div><div style="position:absolute;left:908px;top:297.0px;width:174.7px;height:19.6px;background:#ddf5f9;border-radius:3px;"></div><div style="position:absolute;left:929.9px;top:303.10px;font-family:'Liberation Sans', sans-serif;font-size:9.8px;line-height:9.8px;font-weight:400;color:#6cc6d6;white-space:nowrap;transform:scaleX(0.89);transform-origin:0 0;">FALE COM NOSSO ESPECIALISTA!</div><svg style="position:absolute;left:916.6px;top:302.2px;overflow:visible" width="10" height="9" viewBox="0 0 10 9"><rect x="0.6" y="2.2" width="6.8" height="5.2" rx="1" fill="none" stroke="#6cc6d6" stroke-width="1.1"/><path d="M1.4,7.4 L1.6,8.8 L3.2,7.4" fill="#6cc6d6" stroke="#6cc6d6" stroke-width="0.8" stroke-linejoin="round"/><path d="M3,0.6 H7.8 Q9,0.6 9,1.8 V4.6" fill="none" stroke="#6cc6d6" stroke-width="1.1" stroke-linecap="round"/></svg><div style="position:absolute;right:58.799999999999955px;top:301.12px;font-family:'Liberation Sans', sans-serif;font-size:12.5px;line-height:12.5px;font-weight:700;color:#363c48;white-space:nowrap;letter-spacing:0px;transform:scaleX(1.11);transform-origin:100% 0;">536</div><div style="position:absolute;left:330.5px;top:346.70px;font-family:'Liberation Mono', monospace;font-size:11.375px;line-height:11.375px;font-weight:400;color:#d23c88;white-space:nowrap;letter-spacing:0px;">120220257182330283</div><div style="position:absolute;left:666px;top:338.92px;width:123px;height:24.5px;background:#e5ebfb;border-radius:3px;"></div><svg style="position:absolute;left:676px;top:344.52px;overflow:visible" width="14" height="10" viewBox="0 0 14 10"><path d="M1.7,8.3 C0.5,6.8 1.5,1.3 4.2,1.3 C6.7,1.3 8.7,8.7 11.3,8.7 C13.7,8.7 13.5,1.3 10.3,1.3 C7.7,1.3 4.7,8.7 2.7,8.7 C2.3,8.7 1.9,8.5 1.7,8.3 Z" fill="none" stroke="#5a7fe6" stroke-width="1.6" stroke-linejoin="round"/></svg><div style="position:absolute;left:697.6px;top:344.51px;font-family:'Liberation Sans', sans-serif;font-size:11px;line-height:11px;font-weight:400;color:#5b7fe6;white-space:nowrap;transform:scaleX(0.925);transform-origin:0 0;">FACEBOOK_ADS</div><div style="position:absolute;left:908px;top:340.92px;width:159.6px;height:19.6px;background:#ddf5f9;border-radius:3px;"></div><div style="position:absolute;left:929.9px;top:347.02px;font-family:'Liberation Sans', sans-serif;font-size:9.8px;line-height:9.8px;font-weight:400;color:#6cc6d6;white-space:nowrap;transform:scaleX(0.89);transform-origin:0 0;">TANQUES EM GEOMEMBRANA</div><svg style="position:absolute;left:916.6px;top:346.12px;overflow:visible" width="10" height="9" viewBox="0 0 10 9"><rect x="0.6" y="2.2" width="6.8" height="5.2" rx="1" fill="none" stroke="#6cc6d6" stroke-width="1.1"/><path d="M1.4,7.4 L1.6,8.8 L3.2,7.4" fill="#6cc6d6" stroke="#6cc6d6" stroke-width="0.8" stroke-linejoin="round"/><path d="M3,0.6 H7.8 Q9,0.6 9,1.8 V4.6" fill="none" stroke="#6cc6d6" stroke-width="1.1" stroke-linecap="round"/></svg><div style="position:absolute;right:58.799999999999955px;top:345.04px;font-family:'Liberation Sans', sans-serif;font-size:12.5px;line-height:12.5px;font-weight:700;color:#363c48;white-space:nowrap;letter-spacing:0px;transform:scaleX(1.11);transform-origin:100% 0;">210</div><div style="position:absolute;left:330.5px;top:390.62px;font-family:'Liberation Mono', monospace;font-size:11.375px;line-height:11.375px;font-weight:400;color:#d23c88;white-space:nowrap;letter-spacing:0px;">19603052875</div><div style="position:absolute;left:666px;top:382.84px;width:110px;height:24.5px;background:#e2f5e5;border-radius:3px;"></div><svg style="position:absolute;left:675.6px;top:387.44px;overflow:visible" width="14" height="14" viewBox="0 0 14 14"><path d="M12.4,6.2 H7 V8.4 H10 C9.6,10 8.6,10.8 7,10.8 C5.2,10.8 3.8,9.3 3.8,7.3 C3.8,5.3 5.2,3.8 7,3.8 C7.9,3.8 8.7,4.1 9.3,4.7 L10.9,3.1 C9.9,2.1 8.5,1.5 7,1.5 C3.8,1.5 1.4,4 1.4,7.3 C1.4,10.6 3.8,13.1 7,13.1 C10.3,13.1 12.5,10.8 12.5,7.4 Z" fill="#4a8a55"/></svg><div style="position:absolute;left:697.6px;top:388.43px;font-family:'Liberation Sans', sans-serif;font-size:11px;line-height:11px;font-weight:400;color:#4b7f58;white-space:nowrap;transform:scaleX(0.925);transform-origin:0 0;">GOOGLE_ADS</div><div style="position:absolute;right:58.799999999999955px;top:388.96px;font-family:'Liberation Sans', sans-serif;font-size:12.5px;line-height:12.5px;font-weight:700;color:#363c48;white-space:nowrap;letter-spacing:0px;transform:scaleX(1.11);transform-origin:100% 0;">194</div><div style="position:absolute;left:330.5px;top:434.54px;font-family:'Liberation Mono', monospace;font-size:11.375px;line-height:11.375px;font-weight:400;color:#d23c88;white-space:nowrap;letter-spacing:0px;">23853602142530282</div><div style="position:absolute;left:666px;top:426.76px;width:123px;height:24.5px;background:#e5ebfb;border-radius:3px;"></div><svg style="position:absolute;left:676px;top:432.36px;overflow:visible" width="14" height="10" viewBox="0 0 14 10"><path d="M1.7,8.3 C0.5,6.8 1.5,1.3 4.2,1.3 C6.7,1.3 8.7,8.7 11.3,8.7 C13.7,8.7 13.5,1.3 10.3,1.3 C7.7,1.3 4.7,8.7 2.7,8.7 C2.3,8.7 1.9,8.5 1.7,8.3 Z" fill="none" stroke="#5a7fe6" stroke-width="1.6" stroke-linejoin="round"/></svg><div style="position:absolute;left:697.6px;top:432.35px;font-family:'Liberation Sans', sans-serif;font-size:11px;line-height:11px;font-weight:400;color:#5b7fe6;white-space:nowrap;transform:scaleX(0.925);transform-origin:0 0;">FACEBOOK_ADS</div><div style="position:absolute;left:908px;top:428.76px;width:138.8px;height:19.6px;background:#ddf5f9;border-radius:3px;"></div><div style="position:absolute;left:929.9px;top:434.86px;font-family:'Liberation Sans', sans-serif;font-size:9.8px;line-height:9.8px;font-weight:400;color:#6cc6d6;white-space:nowrap;transform:scaleX(0.89);transform-origin:0 0;">SOLICITE UMA COTAÇÃO!</div><svg style="position:absolute;left:916.6px;top:433.96px;overflow:visible" width="10" height="9" viewBox="0 0 10 9"><rect x="0.6" y="2.2" width="6.8" height="5.2" rx="1" fill="none" stroke="#6cc6d6" stroke-width="1.1"/><path d="M1.4,7.4 L1.6,8.8 L3.2,7.4" fill="#6cc6d6" stroke="#6cc6d6" stroke-width="0.8" stroke-linejoin="round"/><path d="M3,0.6 H7.8 Q9,0.6 9,1.8 V4.6" fill="none" stroke="#6cc6d6" stroke-width="1.1" stroke-linecap="round"/></svg><div style="position:absolute;right:58.799999999999955px;top:432.88px;font-family:'Liberation Sans', sans-serif;font-size:12.5px;line-height:12.5px;font-weight:700;color:#363c48;white-space:nowrap;letter-spacing:0px;transform:scaleX(1.11);transform-origin:100% 0;">161</div><div style="position:absolute;left:330.5px;top:478.46px;font-family:'Liberation Mono', monospace;font-size:11.375px;line-height:11.375px;font-weight:400;color:#d23c88;white-space:nowrap;letter-spacing:0px;">0000000000</div><div style="position:absolute;left:666px;top:470.68px;width:141px;height:24.5px;background:#fcf0dd;border-radius:3px;"></div><svg style="position:absolute;left:676px;top:476.08px;overflow:visible" width="14" height="14" viewBox="0 0 14 14"><path d="M1,12.6 V6.8 H4.6 V12.6 Z M4.6,12.6 V1 H8.8 V12.6 Z M8.8,12.6 V4.6 H12.6 V12.6 Z" fill="none" stroke="#eba53a" stroke-width="1.5" stroke-linejoin="round"/></svg><div style="position:absolute;left:697.6px;top:476.27px;font-family:'Liberation Sans', sans-serif;font-size:11px;line-height:11px;font-weight:400;color:#eba53a;white-space:nowrap;transform:scaleX(0.925);transform-origin:0 0;">NÃO IDENTIFICADA</div><div style="position:absolute;right:58.799999999999955px;top:476.80px;font-family:'Liberation Sans', sans-serif;font-size:12.5px;line-height:12.5px;font-weight:700;color:#363c48;white-space:nowrap;letter-spacing:0px;transform:scaleX(1.11);transform-origin:100% 0;">155</div><div style="position:absolute;left:330.5px;top:522.38px;font-family:'Liberation Mono', monospace;font-size:11.375px;line-height:11.375px;font-weight:400;color:#d23c88;white-space:nowrap;letter-spacing:0px;">23849368822640282</div><div style="position:absolute;left:666px;top:514.6px;width:123px;height:24.5px;background:#e5ebfb;border-radius:3px;"></div><svg style="position:absolute;left:676px;top:520.2px;overflow:visible" width="14" height="10" viewBox="0 0 14 10"><path d="M1.7,8.3 C0.5,6.8 1.5,1.3 4.2,1.3 C6.7,1.3 8.7,8.7 11.3,8.7 C13.7,8.7 13.5,1.3 10.3,1.3 C7.7,1.3 4.7,8.7 2.7,8.7 C2.3,8.7 1.9,8.5 1.7,8.3 Z" fill="none" stroke="#5a7fe6" stroke-width="1.6" stroke-linejoin="round"/></svg><div style="position:absolute;left:697.6px;top:520.19px;font-family:'Liberation Sans', sans-serif;font-size:11px;line-height:11px;font-weight:400;color:#5b7fe6;white-space:nowrap;transform:scaleX(0.925);transform-origin:0 0;">FACEBOOK_ADS</div><div style="position:absolute;left:908px;top:516.6px;width:145.6px;height:19.6px;background:#ddf5f9;border-radius:3px;"></div><div style="position:absolute;left:929.9px;top:522.70px;font-family:'Liberation Sans', sans-serif;font-size:9.8px;line-height:9.8px;font-weight:400;color:#6cc6d6;white-space:nowrap;transform:scaleX(0.89);transform-origin:0 0;">CONVERSE NO WHATSAPP</div><svg style="position:absolute;left:916.6px;top:521.8px;overflow:visible" width="10" height="9" viewBox="0 0 10 9"><rect x="0.6" y="2.2" width="6.8" height="5.2" rx="1" fill="none" stroke="#6cc6d6" stroke-width="1.1"/><path d="M1.4,7.4 L1.6,8.8 L3.2,7.4" fill="#6cc6d6" stroke="#6cc6d6" stroke-width="0.8" stroke-linejoin="round"/><path d="M3,0.6 H7.8 Q9,0.6 9,1.8 V4.6" fill="none" stroke="#6cc6d6" stroke-width="1.1" stroke-linecap="round"/></svg><div style="position:absolute;right:58.799999999999955px;top:520.72px;font-family:'Liberation Sans', sans-serif;font-size:12.5px;line-height:12.5px;font-weight:700;color:#363c48;white-space:nowrap;letter-spacing:0px;transform:scaleX(1.11);transform-origin:100% 0;">125</div><div style="position:absolute;left:330.5px;top:566.30px;font-family:'Liberation Mono', monospace;font-size:11.375px;line-height:11.375px;font-weight:400;color:#d23c88;white-space:nowrap;letter-spacing:0px;">15939740627</div><div style="position:absolute;left:666px;top:558.52px;width:110px;height:24.5px;background:#e2f5e5;border-radius:3px;"></div><svg style="position:absolute;left:675.6px;top:563.12px;overflow:visible" width="14" height="14" viewBox="0 0 14 14"><path d="M12.4,6.2 H7 V8.4 H10 C9.6,10 8.6,10.8 7,10.8 C5.2,10.8 3.8,9.3 3.8,7.3 C3.8,5.3 5.2,3.8 7,3.8 C7.9,3.8 8.7,4.1 9.3,4.7 L10.9,3.1 C9.9,2.1 8.5,1.5 7,1.5 C3.8,1.5 1.4,4 1.4,7.3 C1.4,10.6 3.8,13.1 7,13.1 C10.3,13.1 12.5,10.8 12.5,7.4 Z" fill="#4a8a55"/></svg><div style="position:absolute;left:697.6px;top:564.11px;font-family:'Liberation Sans', sans-serif;font-size:11px;line-height:11px;font-weight:400;color:#4b7f58;white-space:nowrap;transform:scaleX(0.925);transform-origin:0 0;">GOOGLE_ADS</div><div style="position:absolute;right:58.799999999999955px;top:564.64px;font-family:'Liberation Sans', sans-serif;font-size:12.5px;line-height:12.5px;font-weight:700;color:#363c48;white-space:nowrap;letter-spacing:0px;transform:scaleX(1.11);transform-origin:100% 0;">109</div><div style="position:absolute;left:330.5px;top:610.22px;font-family:'Liberation Mono', monospace;font-size:11.375px;line-height:11.375px;font-weight:400;color:#d23c88;white-space:nowrap;letter-spacing:0px;">120220257182330283</div><div style="position:absolute;left:666px;top:602.44px;width:123px;height:24.5px;background:#e5ebfb;border-radius:3px;"></div><svg style="position:absolute;left:676px;top:608.04px;overflow:visible" width="14" height="10" viewBox="0 0 14 10"><path d="M1.7,8.3 C0.5,6.8 1.5,1.3 4.2,1.3 C6.7,1.3 8.7,8.7 11.3,8.7 C13.7,8.7 13.5,1.3 10.3,1.3 C7.7,1.3 4.7,8.7 2.7,8.7 C2.3,8.7 1.9,8.5 1.7,8.3 Z" fill="none" stroke="#5a7fe6" stroke-width="1.6" stroke-linejoin="round"/></svg><div style="position:absolute;left:697.6px;top:608.03px;font-family:'Liberation Sans', sans-serif;font-size:11px;line-height:11px;font-weight:400;color:#5b7fe6;white-space:nowrap;transform:scaleX(0.925);transform-origin:0 0;">FACEBOOK_ADS</div><div style="position:absolute;left:908px;top:604.44px;width:179.7px;height:19.6px;background:#ddf5f9;border-radius:3px;"></div><div style="position:absolute;left:929.9px;top:610.54px;font-family:'Liberation Sans', sans-serif;font-size:9.8px;line-height:9.8px;font-weight:400;color:#6cc6d6;white-space:nowrap;transform:scaleX(0.89);transform-origin:0 0;">GEOMEMBRANA PARA EU TANQUE!</div><svg style="position:absolute;left:916.6px;top:609.64px;overflow:visible" width="10" height="9" viewBox="0 0 10 9"><rect x="0.6" y="2.2" width="6.8" height="5.2" rx="1" fill="none" stroke="#6cc6d6" stroke-width="1.1"/><path d="M1.4,7.4 L1.6,8.8 L3.2,7.4" fill="#6cc6d6" stroke="#6cc6d6" stroke-width="0.8" stroke-linejoin="round"/><path d="M3,0.6 H7.8 Q9,0.6 9,1.8 V4.6" fill="none" stroke="#6cc6d6" stroke-width="1.1" stroke-linecap="round"/></svg><div style="position:absolute;right:58.799999999999955px;top:608.56px;font-family:'Liberation Sans', sans-serif;font-size:12.5px;line-height:12.5px;font-weight:700;color:#363c48;white-space:nowrap;letter-spacing:0px;transform:scaleX(1.11);transform-origin:100% 0;">80</div><div style="position:absolute;left:330.5px;top:654.14px;font-family:'Liberation Mono', monospace;font-size:11.375px;line-height:11.375px;font-weight:400;color:#d23c88;white-space:nowrap;letter-spacing:0px;">23849468794970282</div><div style="position:absolute;left:666px;top:646.36px;width:123px;height:24.5px;background:#e5ebfb;border-radius:3px;"></div><svg style="position:absolute;left:676px;top:651.96px;overflow:visible" width="14" height="10" viewBox="0 0 14 10"><path d="M1.7,8.3 C0.5,6.8 1.5,1.3 4.2,1.3 C6.7,1.3 8.7,8.7 11.3,8.7 C13.7,8.7 13.5,1.3 10.3,1.3 C7.7,1.3 4.7,8.7 2.7,8.7 C2.3,8.7 1.9,8.5 1.7,8.3 Z" fill="none" stroke="#5a7fe6" stroke-width="1.6" stroke-linejoin="round"/></svg><div style="position:absolute;left:697.6px;top:651.95px;font-family:'Liberation Sans', sans-serif;font-size:11px;line-height:11px;font-weight:400;color:#5b7fe6;white-space:nowrap;transform:scaleX(0.925);transform-origin:0 0;">FACEBOOK_ADS</div><div style="position:absolute;left:908px;top:648.36px;width:145.6px;height:19.6px;background:#ddf5f9;border-radius:3px;"></div><div style="position:absolute;left:929.9px;top:654.46px;font-family:'Liberation Sans', sans-serif;font-size:9.8px;line-height:9.8px;font-weight:400;color:#6cc6d6;white-space:nowrap;transform:scaleX(0.89);transform-origin:0 0;">CONVERSE NO WHATSAPP</div><svg style="position:absolute;left:916.6px;top:653.56px;overflow:visible" width="10" height="9" viewBox="0 0 10 9"><rect x="0.6" y="2.2" width="6.8" height="5.2" rx="1" fill="none" stroke="#6cc6d6" stroke-width="1.1"/><path d="M1.4,7.4 L1.6,8.8 L3.2,7.4" fill="#6cc6d6" stroke="#6cc6d6" stroke-width="0.8" stroke-linejoin="round"/><path d="M3,0.6 H7.8 Q9,0.6 9,1.8 V4.6" fill="none" stroke="#6cc6d6" stroke-width="1.1" stroke-linecap="round"/></svg><div style="position:absolute;right:58.799999999999955px;top:652.48px;font-family:'Liberation Sans', sans-serif;font-size:12.5px;line-height:12.5px;font-weight:700;color:#363c48;white-space:nowrap;letter-spacing:0px;transform:scaleX(1.11);transform-origin:100% 0;">53</div><div style="position:absolute;left:330.5px;top:698.06px;font-family:'Liberation Mono', monospace;font-size:11.375px;line-height:11.375px;font-weight:400;color:#d23c88;white-space:nowrap;letter-spacing:0px;">756663501</div><div style="position:absolute;left:666px;top:690.28px;width:110px;height:24.5px;background:#e2f5e5;border-radius:3px;"></div><svg style="position:absolute;left:675.6px;top:694.88px;overflow:visible" width="14" height="14" viewBox="0 0 14 14"><path d="M12.4,6.2 H7 V8.4 H10 C9.6,10 8.6,10.8 7,10.8 C5.2,10.8 3.8,9.3 3.8,7.3 C3.8,5.3 5.2,3.8 7,3.8 C7.9,3.8 8.7,4.1 9.3,4.7 L10.9,3.1 C9.9,2.1 8.5,1.5 7,1.5 C3.8,1.5 1.4,4 1.4,7.3 C1.4,10.6 3.8,13.1 7,13.1 C10.3,13.1 12.5,10.8 12.5,7.4 Z" fill="#4a8a55"/></svg><div style="position:absolute;left:697.6px;top:695.87px;font-family:'Liberation Sans', sans-serif;font-size:11px;line-height:11px;font-weight:400;color:#4b7f58;white-space:nowrap;transform:scaleX(0.925);transform-origin:0 0;">GOOGLE_ADS</div><div style="position:absolute;right:58.799999999999955px;top:696.40px;font-family:'Liberation Sans', sans-serif;font-size:12.5px;line-height:12.5px;font-weight:700;color:#363c48;white-space:nowrap;letter-spacing:0px;transform:scaleX(1.11);transform-origin:100% 0;">49</div><div style="position:absolute;left:330.5px;top:741.98px;font-family:'Liberation Mono', monospace;font-size:11.375px;line-height:11.375px;font-weight:400;color:#d23c88;white-space:nowrap;letter-spacing:0px;">23311910105</div><div style="position:absolute;left:666px;top:734.2px;width:110px;height:24.5px;background:#e2f5e5;border-radius:3px;"></div><svg style="position:absolute;left:675.6px;top:738.8px;overflow:visible" width="14" height="14" viewBox="0 0 14 14"><path d="M12.4,6.2 H7 V8.4 H10 C9.6,10 8.6,10.8 7,10.8 C5.2,10.8 3.8,9.3 3.8,7.3 C3.8,5.3 5.2,3.8 7,3.8 C7.9,3.8 8.7,4.1 9.3,4.7 L10.9,3.1 C9.9,2.1 8.5,1.5 7,1.5 C3.8,1.5 1.4,4 1.4,7.3 C1.4,10.6 3.8,13.1 7,13.1 C10.3,13.1 12.5,10.8 12.5,7.4 Z" fill="#4a8a55"/></svg><div style="position:absolute;left:697.6px;top:739.79px;font-family:'Liberation Sans', sans-serif;font-size:11px;line-height:11px;font-weight:400;color:#4b7f58;white-space:nowrap;transform:scaleX(0.925);transform-origin:0 0;">GOOGLE_ADS</div><div style="position:absolute;right:58.799999999999955px;top:740.32px;font-family:'Liberation Sans', sans-serif;font-size:12.5px;line-height:12.5px;font-weight:700;color:#363c48;white-space:nowrap;letter-spacing:0px;transform:scaleX(1.11);transform-origin:100% 0;">41</div><div style="position:absolute;left:330.5px;top:785.90px;font-family:'Liberation Mono', monospace;font-size:11.375px;line-height:11.375px;font-weight:400;color:#d23c88;white-space:nowrap;letter-spacing:0px;">0000000000</div><div style="position:absolute;left:666px;top:778.12px;width:123px;height:24.5px;background:#e5ebfb;border-radius:3px;"></div><svg style="position:absolute;left:676px;top:783.72px;overflow:visible" width="14" height="10" viewBox="0 0 14 10"><path d="M1.7,8.3 C0.5,6.8 1.5,1.3 4.2,1.3 C6.7,1.3 8.7,8.7 11.3,8.7 C13.7,8.7 13.5,1.3 10.3,1.3 C7.7,1.3 4.7,8.7 2.7,8.7 C2.3,8.7 1.9,8.5 1.7,8.3 Z" fill="none" stroke="#5a7fe6" stroke-width="1.6" stroke-linejoin="round"/></svg><div style="position:absolute;left:697.6px;top:783.71px;font-family:'Liberation Sans', sans-serif;font-size:11px;line-height:11px;font-weight:400;color:#5b7fe6;white-space:nowrap;transform:scaleX(0.925);transform-origin:0 0;">FACEBOOK_ADS</div><div style="position:absolute;right:58.799999999999955px;top:784.24px;font-family:'Liberation Sans', sans-serif;font-size:12.5px;line-height:12.5px;font-weight:700;color:#363c48;white-space:nowrap;letter-spacing:0px;transform:scaleX(1.11);transform-origin:100% 0;">38</div><div style="position:absolute;left:330.5px;top:829.82px;font-family:'Liberation Mono', monospace;font-size:11.375px;line-height:11.375px;font-weight:400;color:#d23c88;white-space:nowrap;letter-spacing:0px;">13164383406</div><div style="position:absolute;left:666px;top:822.04px;width:110px;height:24.5px;background:#e2f5e5;border-radius:3px;"></div><svg style="position:absolute;left:675.6px;top:826.64px;overflow:visible" width="14" height="14" viewBox="0 0 14 14"><path d="M12.4,6.2 H7 V8.4 H10 C9.6,10 8.6,10.8 7,10.8 C5.2,10.8 3.8,9.3 3.8,7.3 C3.8,5.3 5.2,3.8 7,3.8 C7.9,3.8 8.7,4.1 9.3,4.7 L10.9,3.1 C9.9,2.1 8.5,1.5 7,1.5 C3.8,1.5 1.4,4 1.4,7.3 C1.4,10.6 3.8,13.1 7,13.1 C10.3,13.1 12.5,10.8 12.5,7.4 Z" fill="#4a8a55"/></svg><div style="position:absolute;left:697.6px;top:827.63px;font-family:'Liberation Sans', sans-serif;font-size:11px;line-height:11px;font-weight:400;color:#4b7f58;white-space:nowrap;transform:scaleX(0.925);transform-origin:0 0;">GOOGLE_ADS</div><div style="position:absolute;right:58.799999999999955px;top:828.16px;font-family:'Liberation Sans', sans-serif;font-size:12.5px;line-height:12.5px;font-weight:700;color:#363c48;white-space:nowrap;letter-spacing:0px;transform:scaleX(1.11);transform-origin:100% 0;">31</div><div style="position:absolute;left:330.5px;top:873.74px;font-family:'Liberation Mono', monospace;font-size:11.375px;line-height:11.375px;font-weight:400;color:#d23c88;white-space:nowrap;letter-spacing:0px;">22532108111</div><div style="position:absolute;left:666px;top:865.96px;width:110px;height:24.5px;background:#e2f5e5;border-radius:3px;"></div><svg style="position:absolute;left:675.6px;top:870.56px;overflow:visible" width="14" height="14" viewBox="0 0 14 14"><path d="M12.4,6.2 H7 V8.4 H10 C9.6,10 8.6,10.8 7,10.8 C5.2,10.8 3.8,9.3 3.8,7.3 C3.8,5.3 5.2,3.8 7,3.8 C7.9,3.8 8.7,4.1 9.3,4.7 L10.9,3.1 C9.9,2.1 8.5,1.5 7,1.5 C3.8,1.5 1.4,4 1.4,7.3 C1.4,10.6 3.8,13.1 7,13.1 C10.3,13.1 12.5,10.8 12.5,7.4 Z" fill="#4a8a55"/></svg><div style="position:absolute;left:697.6px;top:871.55px;font-family:'Liberation Sans', sans-serif;font-size:11px;line-height:11px;font-weight:400;color:#4b7f58;white-space:nowrap;transform:scaleX(0.925);transform-origin:0 0;">GOOGLE_ADS</div><div style="position:absolute;right:58.799999999999955px;top:872.08px;font-family:'Liberation Sans', sans-serif;font-size:12.5px;line-height:12.5px;font-weight:700;color:#363c48;white-space:nowrap;letter-spacing:0px;transform:scaleX(1.11);transform-origin:100% 0;">29</div></body></html>
